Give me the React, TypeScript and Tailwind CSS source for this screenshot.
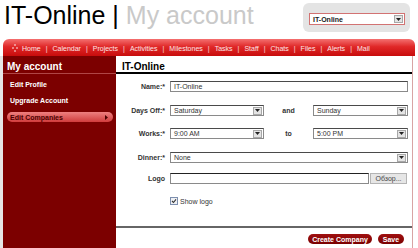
import React from 'react';

const navItems = ['Home', 'Calendar', 'Projects', 'Activities', 'Milestones', 'Tasks', 'Staff', 'Chats', 'Files', 'Alerts', 'Mail'];

function Arrow() {
    return (
        <div className="w-[9px] h-[8px] bg-[#e4e4e4] border border-[#a8a8a8] flex items-center justify-center">
            <svg width="5" height="3" viewBox="0 0 5 3"><path d="M0 0h5L2.5 3z" fill="#222" /></svg>
        </div>
    );
}

function Select({ value, className }: { value: string; className: string }) {
    return (
        <div className={`h-[11px] border border-[#8a8a8a] border-t-[#4a4a4a] bg-white flex items-center justify-between pl-[3px] pr-[1px] ${className}`}>
            <span className="text-[7px] leading-none text-[#333]">{value}</span>
            <Arrow />
        </div>
    );
}

function Label({ children }: { children: React.ReactNode }) {
    return <div className="w-[49px] text-right text-[7px] font-bold text-[#333] leading-none">{children}</div>;
}

export default function App() {
    return (
        <div className="w-[418px] h-[248px] overflow-hidden bg-white flex flex-col font-['Liberation_Sans',Arial,sans-serif]">
            {/* title row */}
            <header className="h-[39px] flex items-start justify-between">
                <h1 className="ml-[4px] mt-[1px] text-[25px] leading-[28px] text-black whitespace-nowrap">
                    IT-Online | <span className="text-[#c9c9c9]">My account</span>
                </h1>
                <div className="mt-[3px] mr-[8px] w-[107px] h-[29px] rounded-[6px] bg-[#e4e4e4] pl-[6px] pt-[10px]">
                    <div className="w-[96px] h-[12px] border border-[#d27272] bg-white flex items-center justify-between pl-[3px] pr-[1px]">
                        <span className="text-[7px] font-bold leading-none text-[#222]">IT-Online</span>
                        <Arrow />
                    </div>
                </div>
            </header>

            {/* nav */}
            <nav className="ml-[3px] w-[412px] h-[17px] rounded-t-[6px] bg-[linear-gradient(#f47070,#e02828_45%,#c80c0c)] flex items-center pt-[1px]">
                <svg className="ml-[9px] mr-[4px]" width="6" height="8" viewBox="0 0 6 8">
                    <circle cx="3" cy="1" r="0.8" fill="#fff" />
                    <circle cx="1" cy="4" r="0.8" fill="#fff" />
                    <circle cx="5" cy="4" r="0.8" fill="#fff" />
                    <circle cx="3" cy="7" r="0.8" fill="#fff" />
                </svg>
                {navItems.map((item, i) => (
                    <React.Fragment key={item}>
                        {i > 0 && <span className="px-[5px] text-[7px] text-white/80 leading-none">|</span>}
                        <span className="text-[7px] text-white/90 leading-none">{item}</span>
                    </React.Fragment>
                ))}
            </nav>

            <div className="flex flex-1">
                <div className="w-[3px] bg-[#e6e6e6]" />

                {/* sidebar */}
                <aside className="w-[113px] bg-[#7c0000] flex flex-col">
                    <div className="h-[17px] pl-[4px] pt-[5px] text-[10px] font-bold leading-[12px] text-white">My account</div>
                    <div className="h-[1px] bg-[#b04646]" />
                    <div className="pt-[3px] flex flex-col">
                        <div className="h-[16px] pl-[7px] flex items-center text-[7px] font-bold text-white">Edit Profile</div>
                        <div className="h-[16px] pl-[7px] flex items-center text-[7px] font-bold text-white">Upgrade Account</div>
                        <div className="h-[16px] flex items-center">
                            <div className="ml-[4px] w-[106px] h-[10px] rounded-full bg-[linear-gradient(#ee8080,#d03c3c)] flex items-center justify-between pl-[3px] pr-[5px]">
                                <span className="text-[7px] font-bold text-[#4a0000] leading-none">Edit Companies</span>
                                <svg width="3" height="5" viewBox="0 0 3 5"><path d="M0 0l3 2.5L0 5z" fill="#4a0000" /></svg>
                            </div>
                        </div>
                    </div>
                </aside>

                {/* main */}
                <main className="w-[297px] border-r border-[#d8a4a4] flex flex-col">
                    <div className="h-[16px] pl-[6px] pt-[5px] text-[10px] font-bold leading-[12px] text-black">IT-Online</div>
                    <div className="h-[2px] bg-black" />

                    <div className="flex items-center mt-[7px]">
                        <Label>Name:*</Label>
                        <div className="ml-[5px] w-[238px] h-[11px] border border-[#8a8a8a] border-t-[#4a4a4a] pl-[3px] flex items-center text-[7px] leading-none text-[#333]">IT-Online</div>
                    </div>

                    <div className="flex items-center mt-[13px]">
                        <Label>Days Off:*</Label>
                        <Select value="Saturday" className="ml-[5px] w-[94px]" />
                        <div className="w-[49px] text-center text-[7px] font-bold text-[#333] leading-none">and</div>
                        <Select value="Sunday" className="w-[95px]" />
                    </div>

                    <div className="flex items-center mt-[12px]">
                        <Label>Works:*</Label>
                        <Select value="9:00 AM" className="ml-[5px] w-[94px]" />
                        <div className="w-[49px] text-center text-[7px] font-bold text-[#333] leading-none">to</div>
                        <Select value="5:00 PM" className="w-[95px]" />
                    </div>

                    <div className="flex items-center mt-[13px]">
                        <Label>Dinner:*</Label>
                        <Select value="None" className="ml-[5px] w-[238px]" />
                    </div>

                    <div className="flex items-center mt-[10px]">
                        <Label>Logo</Label>
                        <div className="ml-[5px] w-[199px] h-[11px] border border-[#8a8a8a] border-t-[#222]" />
                        <div className="ml-[1px] w-[37px] h-[11px] bg-[#e6e6e6] border border-[#b4b4b4] flex items-center justify-center text-[7px] leading-none text-[#444]">Обзор...</div>
                    </div>

                    <div className="flex items-center mt-[13px] ml-[54px]">
                        <svg width="8" height="8" viewBox="0 0 8 8">
                            <rect x="0.5" y="0.5" width="7" height="7" fill="#eef0f4" stroke="#7d8fae" />
                            <path d="M2 4l1.5 1.5L6 2.3" fill="none" stroke="#333" strokeWidth="1.1" />
                        </svg>
                        <span className="ml-[2px] text-[7px] leading-none text-[#333]">Show logo</span>
                    </div>

                    <div className="mt-[21px] h-[2px] bg-[#666]" />

                    <div className="flex justify-end gap-[6px] pr-[8px] mt-[6px]">
                        <div className="w-[64px] h-[10px] rounded-full bg-[linear-gradient(#a01010,#7a0000)] flex items-center justify-center text-[7px] font-bold leading-none text-white">Create Company</div>
                        <div className="w-[26px] h-[10px] rounded-full bg-[linear-gradient(#a01010,#7a0000)] flex items-center justify-center text-[7px] font-bold leading-none text-white">Save</div>
                    </div>
                </main>
            </div>
        </div>
    );
}
